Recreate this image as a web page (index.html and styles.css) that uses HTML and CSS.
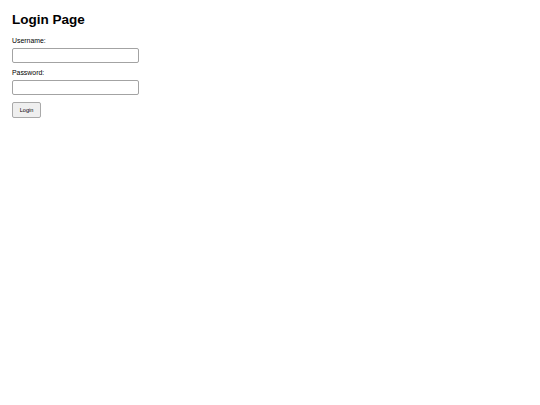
FILE: index.html
```html
<!DOCTYPE html>
<html>
<head>
<meta charset="utf-8">
<link rel="stylesheet" href="styles.css">
</head>
<body>
<div class="page">
  <h1 class="title">Login Page</h1>
  <form class="login-form">
    <div class="field">
      <label class="field-label" for="username">Username:</label>
      <input class="field-input" id="username" type="text">
    </div>
    <div class="field">
      <label class="field-label" for="password">Password:</label>
      <input class="field-input" id="password" type="password">
    </div>
    <button class="login-button" type="button">Login</button>
  </form>
</div>
</body>
</html>
```
FILE: styles.css
```css
html, body {
  margin: 0;
  padding: 0;
  background: #ffffff;
}
body {
  font-family: "Liberation Sans", Arial, sans-serif;
  color: #000;
}
.page {
  padding: 12px 12px;
}
.title {
  margin: 0 0 9px 0;
  font-size: 13.5px;
  font-weight: bold;
  line-height: 16px;
}
.login-form {
  display: flex;
  flex-direction: column;
  align-items: flex-start;
}
.field {
  display: flex;
  flex-direction: column;
  align-items: flex-start;
  margin-bottom: 6px;
}
.field-label {
  font-size: 6.9px;
  line-height: 8px;
  margin-bottom: 3px;
}
.field-input {
  box-sizing: border-box;
  width: 127px;
  height: 15px;
  margin: 0;
  padding: 0 2px;
  border: 1px solid #a3a3a3;
  border-radius: 2px;
  background: #fff;
  font-size: 7px;
}
.login-button {
  box-sizing: border-box;
  width: 29px;
  height: 16px;
  margin: 1px 0 0 0;
  padding: 0;
  border: 1px solid #a9a9a9;
  border-radius: 2px;
  background: #efefef;
  font-family: "Liberation Sans", Arial, sans-serif;
  font-size: 5.6px;
  color: #000;
}
```
